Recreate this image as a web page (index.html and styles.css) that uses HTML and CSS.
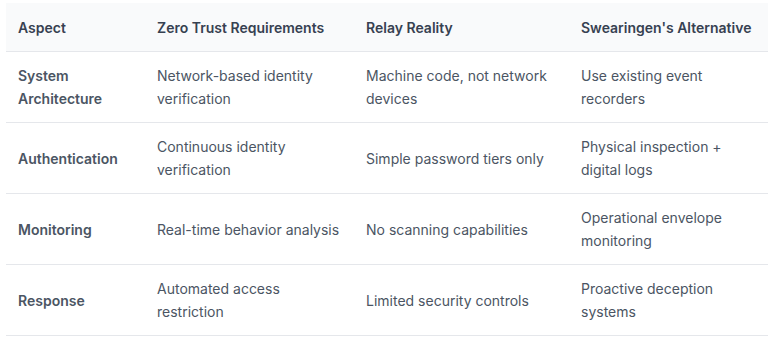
FILE: index.html
```html
<!DOCTYPE html>
<html lang="en">
  <head>
    <meta charset="UTF-8" />
    <title>Zero Trust Comparison</title>
    <link rel="stylesheet" href="styles.css">
  </head>
  <body>
    <div class="wrap">
      <table class="compare">
        <colgroup>
          <col class="c1" />
          <col class="c2" />
          <col class="c3" />
          <col class="c4" />
        </colgroup>
        <thead>
          <tr>
            <th>Aspect</th>
            <th>Zero Trust Requirements</th>
            <th>Relay Reality</th>
            <th>Swearingen's Alternative</th>
          </tr>
        </thead>
        <tbody>
          <tr>
            <td class="aspect">System Architecture</td>
            <td>Network-based identity verification</td>
            <td>Machine code, not network devices</td>
            <td>Use existing event recorders</td>
          </tr>
          <tr>
            <td class="aspect">Authentication</td>
            <td>Continuous identity verification</td>
            <td>Simple password tiers only</td>
            <td>Physical inspection + digital logs</td>
          </tr>
          <tr>
            <td class="aspect">Monitoring</td>
            <td>Real-time behavior analysis</td>
            <td>No scanning capabilities</td>
            <td>Operational envelope monitoring</td>
          </tr>
          <tr>
            <td class="aspect">Response</td>
            <td>Automated access restriction</td>
            <td>Limited security controls</td>
            <td>Proactive deception systems</td>
          </tr>
        </tbody>
      </table>
    </div>
  </body>
</html>
```

FILE: styles.css
```css
html {
  font-family: Inter, "Liberation Sans", sans-serif;
}
body {
  margin: 0;
  background: #fff;
}
.wrap {
  padding: 3px 4px 0 6px;
}
.compare {
  width: 762px;
  border-collapse: collapse;
  table-layout: fixed;
  font-size: 14px;
  line-height: 23px;
  color: #4b5563;
}
.c1 { width: 139px; }
.c2 { width: 209px; }
.c3 { width: 215px; }
.c4 { width: 199px; }
.compare thead tr {
  background-color: #f9fafb;
}
.compare th {
  text-align: left;
  font-weight: 600;
  color: #374151;
  padding: 13px 12px 12px;
  border-bottom: 1px solid #e5e7eb;
}
.compare td {
  padding: 12px;
  border-bottom: 1px solid #e5e7eb;
  vertical-align: middle;
}
.compare .aspect {
  font-weight: 600;
}
```
